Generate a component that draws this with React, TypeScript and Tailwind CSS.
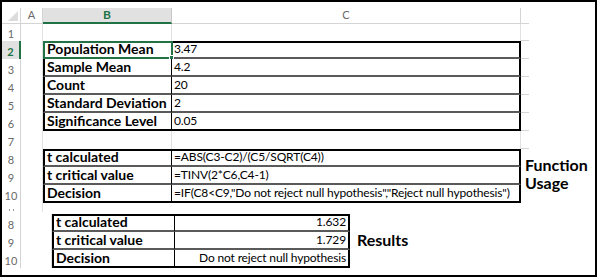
import type { ReactNode } from 'react';

type Cell = { n: number; b?: string; c?: string; pos?: 'first' | 'mid' | 'last'; active?: boolean; cRight?: boolean };

const topRows: Cell[] = [
  { n: 1 },
  { n: 2, b: 'Population Mean', c: '3.47', pos: 'first', active: true },
  { n: 3, b: 'Sample Mean', c: '4.2', pos: 'mid' },
  { n: 4, b: 'Count', c: '20', pos: 'mid' },
  { n: 5, b: 'Standard Deviation', c: '2', pos: 'mid' },
  { n: 6, b: 'Significance Level', c: '0.05', pos: 'last' },
  { n: 7 },
];

const formulaRows: Cell[] = [
  { n: 8, b: 't calculated', c: '=ABS(C3-C2)/(C5/SQRT(C4))', pos: 'first' },
  { n: 9, b: 't critical value', c: '=TINV(2*C6,C4-1)', pos: 'mid' },
  { n: 10, b: 'Decision', c: '=IF(C8<C9,"Do not reject null hypothesis","Reject null hypothesis")', pos: 'last' },
];

const resultRows: Cell[] = [
  { n: 8, b: 't calculated', c: '1.632', pos: 'first', cRight: true },
  { n: 9, b: 't critical value', c: '1.729', pos: 'mid', cRight: true },
  { n: 10, b: 'Decision', c: 'Do not reject null hypothesis', pos: 'last', cRight: true },
];

function RowNum({ n, active }: { n?: number; active?: boolean }) {
  return (
    <div
      className={`w-[19px] shrink-0 flex items-end justify-center pb-[2px] text-[11px] leading-none ${
        active ? 'text-[#217346] font-bold border-r-2 border-[#217346] bg-[#e1e1e1]' : 'text-[#6a6a6a] border-r border-[#d4d4d4]'
      }`}
    >
      {n}
    </div>
  );
}

function SheetRow({ row, aW, bW, cW, stub = true, h = 'h-[18px]' }: { row: Cell; aW: string; bW: string; cW: string; stub?: boolean; h?: string }) {
  const { pos } = row;
  const edge =
    pos === 'first'
      ? 'border-t-2 border-t-black border-b-2 border-b-[#5a5a5a]'
      : pos === 'mid'
      ? 'border-b-2 border-b-[#5a5a5a]'
      : pos === 'last'
      ? 'border-b-2 border-b-black'
      : '';
  return (
    <div className={`flex ${h} shrink-0`}>
      <RowNum n={row.n} active={row.active} />
      <div className={`${aW} shrink-0 border-r border-[#e2e2e2]`} />
      <div
        className={`${bW} shrink-0 relative flex items-end pl-[2px] pb-[1px] font-bold text-[14px] leading-none text-black whitespace-nowrap ${edge} ${
          pos ? 'border-l-2 border-l-black border-r border-r-black' : 'border-r border-r-[#e2e2e2]'
        }`}
      >
        {row.b}
        {row.active && (
          <>
            <div className="absolute -inset-[2px] border-2 border-[#217346]" />
            <div className="absolute -right-[3px] -bottom-[3px] w-[5px] h-[5px] bg-[#217346] border border-white" />
          </>
        )}
      </div>
      <div
        className={`${cW} shrink-0 flex items-end pb-[2px] text-[12px] tracking-[-0.15px] leading-none text-black whitespace-nowrap ${edge} ${
          row.cRight ? 'justify-end pr-[2px]' : 'pl-[2px]'
        } ${pos ? 'border-r-2 border-r-black' : 'border-r border-r-[#e2e2e2]'}`}
      >
        {row.c}
      </div>
      {stub && <div className="w-[8px] shrink-0 border-b border-[#d4d4d4]" />}
    </div>
  );
}

function Label({ children, className }: { children: ReactNode; className: string }) {
  return <div className={`font-bold text-[16px] leading-[18px] text-black ${className}`}>{children}</div>;
}

export default function App() {
  return (
    <div className="w-[597px] h-[277px] bg-white border-2 border-black overflow-hidden font-[Lato,sans-serif]">
      <div className="h-[6px]" />
      {/* column headers */}
      <div className="flex h-[16px]">
        <div className="w-[19px] shrink-0 border-r border-b border-[#d4d4d4] flex items-end justify-end pr-[2px] pb-[2px]">
          <svg width="10" height="10" viewBox="0 0 10 10">
            <polygon points="10,0 10,10 0,10" fill="#dcdcdc" />
          </svg>
        </div>
        <div className="w-[22px] shrink-0 border-r border-b border-[#d4d4d4] flex items-center justify-center text-[11px] text-[#6a6a6a]">
          A
        </div>
        <div className="w-[129px] shrink-0 bg-[#e1e1e1] border-r border-[#c6c6c6] border-b-2 border-b-[#217346] flex items-center justify-center text-[12px] font-bold text-[#217346]">
          B
        </div>
        <div className="w-[349px] shrink-0 border-r border-b border-[#d4d4d4] flex items-center justify-center text-[11px] text-[#6a6a6a]">
          C
        </div>
        <div className="w-[8px] shrink-0 border-b border-[#d4d4d4]" />
      </div>

      {topRows.map((r) => (
        <SheetRow key={r.n} row={r} aW="w-[22px]" bW="w-[129px]" cW="w-[349px]" h={r.n === 1 ? 'h-[17px]' : 'h-[18px]'} />
      ))}

      <div className="flex">
        <div className="flex flex-col shrink-0">
          {formulaRows.map((r) => (
            <SheetRow key={r.n} row={r} aW="w-[22px]" bW="w-[129px]" cW="w-[349px]" stub={false} />
          ))}
        </div>
        <Label className="pl-[4px] pt-[7px] whitespace-nowrap">
          Function
          <br />
          Usage
        </Label>
      </div>

      {/* clipped top of row 11, cut where the second capture begins */}
      <div className="flex h-[9px]">
        <div className="w-[19px] shrink-0 border-r border-[#d4d4d4] flex items-end justify-center gap-[3px] pb-[1px]">
          <div className="w-[1px] h-[2px] bg-[#9a9a9a]" />
          <div className="w-[1px] h-[2px] bg-[#9a9a9a]" />
        </div>
        <div className="w-[22px] shrink-0 border-r border-[#e2e2e2]" />
      </div>
      <div className="flex h-[2px]">
        <div className="w-[19px] border-r border-[#d4d4d4]" />
      </div>

      <div className="flex">
        <div className="flex flex-col shrink-0">
          {resultRows.map((r) => (
            <SheetRow key={r.n} row={r} aW="w-[31px]" bW="w-[123px]" cW="w-[175px]" stub={false} />
          ))}
        </div>
        <Label className="pl-[7px] pt-[17px]">Results</Label>
      </div>
    </div>
  );
}
